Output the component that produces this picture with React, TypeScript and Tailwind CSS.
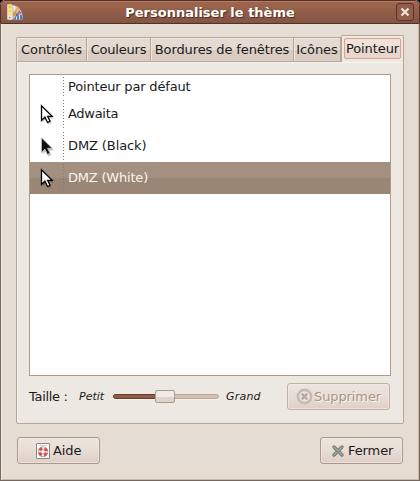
import type { ReactNode } from "react";

function Cursor({ dark = false }: { dark?: boolean }) {
  return (
    <svg width="15" height="22" viewBox="0 0 15 22" className="mt-px block shrink-0">
      <path d="M2.500 3.500v15l3.400-3.200 2.600 5.200 3-1.400-2.500-4.600h5z" fill="#000" opacity=".22" />
      <path
        d="M1.500 1.800v14.600l3.400-3.200 2.600 5.300 2.600-1.200-2.500-5h4.600z"
        fill={dark ? "#111" : "#fff"}
        stroke={dark ? "#b4b4b4" : "#000"}
        strokeWidth={dark ? 1 : 1.300}
      />
    </svg>
  );
}

function ThemeIcon() {
  return (
    <svg width="17" height="17" viewBox="0 0 17 17" className="block shrink-0">
      <path d="M5 1.300C11 .8 15.500 6 16 15.500H5z" fill="#d3cdc9" />
      <path d="M6 1.500l3 .8-2 5z" fill="#e9e5e2" />
      <path d="M9.500 3l2.800 1.800-3 3.700-1.800 1z" fill="#f0b04a" />
      <path d="M6 8.500l3-2 .5 3-3.500 4z" fill="#dc9350" />
      <path d="M12.500 6l2 3.200-4 2-1.500-1z" fill="#9a7ba5" />
      <path d="M9 10l3 1-4 3z" fill="#6e6180" />
      <path d="M7 14l7.500-3.500L16 15.500H6z" fill="#4a78b0" />
      <path d="M9.500 12.500v3M12.500 11v4.500" stroke="#d5e2f1" />
      <rect x=".5" y=".5" width="4.500" height="15" rx=".8" fill="#f2efe8" stroke="#d2cdc8" />
      <rect x="1.200" y="1.500" width="3.200" height="3" fill="#f0d21c" />
      <rect x="1.200" y="5.500" width="3.200" height="3" fill="#f5db2c" />
      <rect x="1.200" y="9.500" width="3.200" height="2" fill="#f3df6b" />
      <circle cx="2.700" cy="13.500" r=".8" fill="#77726e" />
    </svg>
  );
}

function HelpIcon() {
  return (
    <svg width="14" height="16" viewBox="0 0 14 16" className="block shrink-0">
      <rect x=".5" y=".5" width="13" height="15" rx=".5" fill="#fbfbfa" stroke="#858782" />
      <path d="M3 2.500h8" stroke="#cfcfcc" />
      <circle cx="7" cy="8.700" r="3.500" fill="none" stroke="#888" strokeWidth="3.400" />
      <circle cx="7" cy="8.700" r="3.500" fill="none" stroke="#f0eceb" strokeWidth="2.400" />
      <circle cx="7" cy="8.700" r="3.600" fill="none" stroke="#e04545" strokeWidth="2.600" strokeDasharray="3.300 2.355" strokeDashoffset="-1.180" />
    </svg>
  );
}

function Tab({ children, className }: { children: ReactNode; className: string }) {
  return (
    <div
      className={`box-border h-6 shrink-0 border-t border-r border-[#b8a595] bg-linear-to-b from-[#e4dad1] from-50% to-[#d9cdc3] to-50% pt-[3px] text-center leading-[18px] shadow-[inset_1px_1px_0_#eee6df] ${className}`}
    >
      {children}
    </div>
  );
}

function Button({ children, className }: { children: ReactNode; className: string }) {
  return (
    <button
      className={`box-border flex h-[27px] shrink-0 items-center rounded-[3px] border border-[#a99a8d] bg-linear-to-b from-[#ece5df] via-[#e7ddd6] via-50% to-[#decfc7] whitespace-nowrap shadow-[inset_0_0_0_1px_#f1eae4aa] ${className}`}
    >
      {children}
    </button>
  );
}

function Row({ label, icon, className }: { label: string; icon?: ReactNode; className: string }) {
  return (
    <div className={`flex shrink-0 items-center ${className}`}>
      <div className="flex h-full w-[33px] shrink-0 items-center pl-[10px]">{icon}</div>
      <div className="h-full w-px shrink-0 bg-[repeating-linear-gradient(to_bottom,transparent_0_2px,#837970_2px_3px)]" />
      <span className="pl-1">{label}</span>
    </div>
  );
}

export default function App() {
  return (
    <div className="bg-black">
      <div className="box-border flex h-[481px] w-[420px] flex-col overflow-hidden rounded-t-[5px] bg-[#e5dcd3] font-['DejaVu_Sans',sans-serif] text-[13px] leading-4 text-[#1a1a1a]">
        <header className="box-border flex h-6 shrink-0 items-center rounded-t-[5px] border border-[#513027] bg-linear-to-b from-[#a0674f] to-[#845543] pl-[6px] shadow-[inset_0_1px_0_#b67a61]">
          <ThemeIcon />
          <h1 className="w-[372px] pt-px text-center text-[13px] font-bold text-white [text-shadow:1px_1px_1px_#4b2b20]">
            Personnaliser le thème
          </h1>
          <div className="box-border flex h-[18px] w-[18px] shrink-0 items-center justify-center rounded-[3px] border border-[#593427] bg-[#925e49]">
            <svg width="10" height="10" viewBox="0 0 10 10">
              <path d="M1.500 1.500l7 7m0-7l-7 7" stroke="#efe5df" strokeWidth="2.200" />
            </svg>
          </div>
        </header>
        <main className="box-border flex flex-1 flex-col border-x border-b border-[#75675e] px-[15px] pt-[11px] shadow-[inset_1px_0_0_#f4eee9,inset_-1px_-1px_0_#cdb9a9]">
          <nav className="flex h-[26px] shrink-0 items-end whitespace-nowrap">
            <Tab className="w-[71px] rounded-tl-[2px] border-l tracking-[-0.1px]">Contrôles</Tab>
            <Tab className="w-16 tracking-[-0.2px]">Couleurs</Tab>
            <Tab className="w-[143px] tracking-[-0.1px]">Bordures de fenêtres</Tab>
            <Tab className="w-[47px] tracking-[-0.1px]">Icônes</Tab>
            <div className="relative z-10 -mb-px box-border h-[27px] w-[63px] shrink-0 rounded-t-[2px] border border-b-0 border-[#b8a595] bg-[#ede8e2] p-[2px]">
              <div className="box-border h-[21px] rounded-[2px] border border-[#d9a18a] bg-linear-to-b from-[#eee2db] from-50% to-[#e9d7ce] to-50% text-center leading-[19px] tracking-[-0.1px]">
                Pointeur
              </div>
            </div>
          </nav>
          <section className="box-border h-[363px] w-[388px] shrink-0 rounded-b-[2px] border border-[#b8a595] bg-[#ede8e2] px-3 pt-3 shadow-[inset_1px_1px_0_#f7f3ef]">
            <div className="box-border flex h-[302px] w-[362px] flex-col border border-[#b09b88] bg-white">
              <Row label="Pointeur par défaut" className="h-[23px] tracking-[-0.18px]" />
              <Row label="Adwaita" icon={<Cursor />} className="h-8 tracking-[-0.3px]" />
              <Row label="DMZ (Black)" icon={<Cursor dark />} className="h-8 tracking-[-0.1px]" />
              <Row
                label="DMZ (White)"
                icon={<Cursor />}
                className="h-8 bg-linear-to-b from-[#a39080] from-50% to-[#9a8675] to-50% tracking-[-0.2px] text-[#f8f4f0]"
              />
            </div>
            <div className="mt-[7px] flex h-[27px] items-center">
              <span className="w-[50px] shrink-0 tracking-[-0.3px] whitespace-nowrap">Taille :</span>
              <span className="w-[34px] shrink-0 text-[11px] italic">Petit</span>
              <div className="relative h-[13px] w-[106px] shrink-0">
                <div className="mt-[4px] box-border h-[5px] rounded-[3px] border border-[#b9a697] bg-[#d2c2b4] shadow-[0_1px_0_#f7f2ed]" />
                <div className="absolute top-[4px] left-0 box-border h-[5px] w-[45px] rounded-l-[3px] border border-[#62402f] bg-[#925c45]" />
                <div className="absolute top-0 left-[42px] box-border h-[13px] w-5 rounded-[2px] border border-[#aa9b8e] bg-linear-to-b from-[#f0ebe6] from-50% to-[#ded4cc] to-50%" />
              </div>
              <span className="ml-[7px] w-[61px] shrink-0 text-[11px] tracking-[0.2px] italic">Grand</span>
              <Button className="w-[103px] border-[#c2b1a2] pl-2 tracking-[-0.1px] text-[#a99582] [text-shadow:1px_1px_0_#faf6f2]">
                <svg width="17" height="17" viewBox="0 0 17 17" className="mr-px shrink-0">
                  <circle cx="8.500" cy="8.500" r="6.600" fill="#ebe4df" stroke="#c6bab4" strokeWidth="2.600" />
                  <path d="M5.700 5.700l5.600 5.600m0-5.600l-5.600 5.600" stroke="#b6aaa4" strokeWidth="2.400" />
                </svg>
                Supprimer
              </Button>
            </div>
          </section>
          <footer className="mt-[13px] flex w-[388px] justify-between px-px">
            <Button className="w-[83px] pl-[18px] tracking-[-0.1px]">
              <HelpIcon />
              <span className="ml-[3px]">Aide</span>
            </Button>
            <Button className="w-[83px] pl-[11px] tracking-[-0.1px]">
              <svg width="12" height="12" viewBox="0 0 12 12" className="mr-1 shrink-0">
                <path d="M2 2l8 8m0-8l-8 8" stroke="#707870" strokeWidth="3.200" strokeLinecap="round" />
                <path d="M2 2l8 8m0-8l-8 8" stroke="#a5aca5" strokeWidth="1.400" strokeLinecap="round" />
              </svg>
              Fermer
            </Button>
          </footer>
        </main>
      </div>
    </div>
  );
}
